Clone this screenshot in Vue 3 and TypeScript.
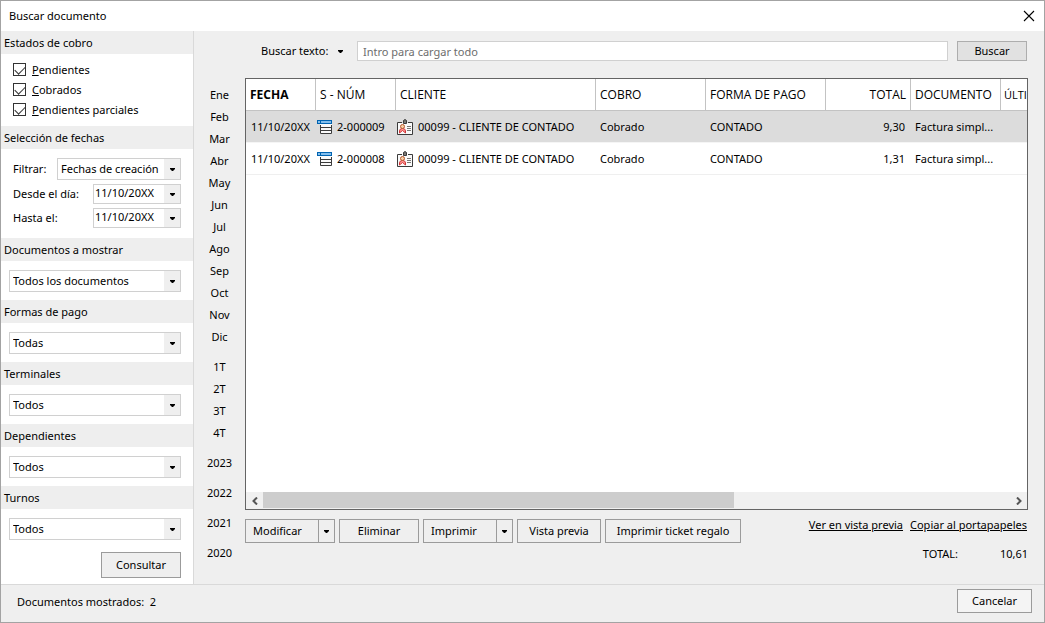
<script setup lang="ts">
import { ref } from 'vue'

interface Row {
  id: number
  date: string
  num: string
  client: string
  status: string
  payment: string
  total: string
  doc: string
}

const states = ref([
  { id: 'pend', key: 'P', rest: 'endientes', on: true },
  { id: 'cob', key: 'C', rest: 'obrados', on: true },
  { id: 'parc', key: 'P', rest: 'endientes parciales', on: true },
])

const dates = ref([
  { id: 'from', label: 'Desde el día:', value: '11/10/20XX' },
  { id: 'to', label: 'Hasta el:', value: '11/10/20XX' },
])

const filters = [
  { id: 'docs', title: 'Documentos a mostrar', value: 'Todos los documentos' },
  { id: 'pago', title: 'Formas de pago', value: 'Todas' },
  { id: 'term', title: 'Terminales', value: 'Todos' },
  { id: 'dep', title: 'Dependientes', value: 'Todos' },
  { id: 'turn', title: 'Turnos', value: 'Todos' },
]

const months = ['Ene', 'Feb', 'Mar', 'Abr', 'May', 'Jun', 'Jul', 'Ago', 'Sep', 'Oct', 'Nov', 'Dic']
const quarters = ['1T', '2T', '3T', '4T']
const years = ['2023', '2022', '2021', '2020']

const rows: Row[] = [
  { id: 9, date: '11/10/20XX', num: '2-000009', client: '00099 - CLIENTE DE CONTADO', status: 'Cobrado', payment: 'CONTADO', total: '9,30', doc: 'Factura simpl...' },
  { id: 8, date: '11/10/20XX', num: '2-000008', client: '00099 - CLIENTE DE CONTADO', status: 'Cobrado', payment: 'CONTADO', total: '1,31', doc: 'Factura simpl...' },
]
const selected = ref(9)
const query = ref('')
</script>

<template>
  <div class="window">
    <header class="titlebar">
      <h1>Buscar documento</h1>
      <button class="close" type="button" aria-label="Cerrar">
        <svg width="12" height="12" viewBox="0 0 12 12"><path d="M1 1L11 11M11 1L1 11" stroke="#000" stroke-width="1.1" fill="none" /></svg>
      </button>
    </header>

    <div class="body">
      <aside class="sidebar">
        <h2>Estados de cobro</h2>
        <div class="checks">
          <label v-for="s in states" :key="s.id">
            <input v-model="s.on" type="checkbox" />
            <span><u>{{ s.key }}</u>{{ s.rest }}</span>
          </label>
        </div>

        <h2>Selección de fechas</h2>
        <div class="dates">
          <div class="field">
            <label for="filter">Filtrar:</label>
            <div class="combo wide">
              <select id="filter"><option>Fechas de creación</option></select>
              <span class="drop"><svg class="caret" width="5" height="3" viewBox="0 0 5 3"><path d="M0 0H5V1L3 3H2L0 1Z" /></svg></span>
            </div>
          </div>
          <div v-for="d in dates" :key="d.id" class="field">
            <label :for="d.id">{{ d.label }}</label>
            <div class="combo date">
              <input :id="d.id" v-model="d.value" type="text" />
              <button class="drop" type="button" aria-label="Abrir calendario"><svg class="caret" width="5" height="3" viewBox="0 0 5 3"><path d="M0 0H5V1L3 3H2L0 1Z" /></svg></button>
            </div>
          </div>
        </div>

        <template v-for="f in filters" :key="f.id">
          <h2><label :for="f.id">{{ f.title }}</label></h2>
          <div class="pick">
            <div class="combo">
              <select :id="f.id"><option>{{ f.value }}</option></select>
              <span class="drop"><svg class="caret" width="5" height="3" viewBox="0 0 5 3"><path d="M0 0H5V1L3 3H2L0 1Z" /></svg></span>
            </div>
          </div>
        </template>
        <button class="btn consult" type="button">Consultar</button>
      </aside>

      <nav class="periods">
        <div class="group">
          <button v-for="m in months" :key="m" type="button">{{ m }}</button>
        </div>
        <div class="group">
          <button v-for="q in quarters" :key="q" type="button">{{ q }}</button>
        </div>
        <div class="group years">
          <button v-for="y in years" :key="y" type="button">{{ y }}</button>
        </div>
      </nav>

      <main class="main">
        <div class="search">
          <label for="query">Buscar texto:</label>
          <button class="bare" type="button" aria-label="Opciones de búsqueda"><svg class="caret" width="5" height="3" viewBox="0 0 5 3"><path d="M0 0H5V1L3 3H2L0 1Z" /></svg></button>
          <input id="query" v-model="query" type="text" placeholder="Intro para cargar todo" />
          <button class="btn find" type="button">Buscar</button>
        </div>

        <div class="grid">
          <div class="viewport">
            <table>
              <colgroup>
                <col class="c-date" /><col class="c-num" /><col class="c-client" /><col class="c-status" />
                <col class="c-pay" /><col class="c-total" /><col class="c-doc" /><col class="c-last" />
              </colgroup>
              <thead>
                <tr>
                  <th class="sorted">FECHA</th>
                  <th>S - NÚM</th>
                  <th>CLIENTE</th>
                  <th>COBRO</th>
                  <th>FORMA DE PAGO</th>
                  <th class="num">TOTAL</th>
                  <th>DOCUMENTO</th>
                  <th>ÚLTI</th>
                </tr>
              </thead>
              <tbody>
                <tr v-for="r in rows" :key="r.id" :class="{ selected: r.id === selected }" @click="selected = r.id">
                  <td>{{ r.date }}</td>
                  <td class="with-icon">
                    <div class="cell">
                      <svg width="15" height="14" viewBox="0 0 15 14">
                        <rect x="3" y="2" width="12" height="12" fill="#fafafa" />
                        <path d="M3.5 5V13.5H14.5V5M3 7.5H15M3 10.5H15" fill="none" stroke="#3b3b3b" />
                        <rect x="0.5" y="0.5" width="14" height="3" fill="#83beec" stroke="#0063b1" />
                        <path d="M3.5 1V3" stroke="#0063b1" />
                      </svg>
                      <span>{{ r.num }}</span>
                    </div>
                  </td>
                  <td class="with-icon">
                    <div class="cell">
                      <svg width="16" height="16" viewBox="0 0 16 16">
                        <path d="M5 3.5H0.5V15.5H15.5V3.5H11" fill="none" stroke="#3b3b3b" />
                        <path d="M1 4H15V15H1Z" fill="#fafafa" />
                        <path d="M6.5 4.5V1.5Q8 -0.5 9.5 1.5V4.5Z" fill="#797774" stroke="#3b3b3b" />
                        <path d="M10 7.5H14M10 9.5H14M10 11.5H14" stroke="#797774" />
                        <path d="M2.5 14V12Q2.5 9.5 5.5 9.5Q8.5 9.5 8.5 12V14L5.5 11.5Z" fill="#ff9a94" stroke="#d13438" />
                        <circle cx="5.5" cy="7.5" r="2" fill="#f8d0a8" stroke="#b5562c" />
                      </svg>
                      <span>{{ r.client }}</span>
                    </div>
                  </td>
                  <td>{{ r.status }}</td>
                  <td>{{ r.payment }}</td>
                  <td class="num">{{ r.total }}</td>
                  <td>{{ r.doc }}</td>
                  <td></td>
                </tr>
              </tbody>
            </table>
          </div>
          <div class="scrollbar">
            <button type="button" aria-label="Desplazar a la izquierda"><svg width="6" height="8" viewBox="0 0 6 8"><path d="M5 0.5L1.5 4L5 7.5" /></svg></button>
            <div class="track"><div class="thumb"></div></div>
            <button type="button" aria-label="Desplazar a la derecha"><svg width="6" height="8" viewBox="0 0 6 8"><path d="M1 0.5L4.5 4L1 7.5" /></svg></button>
          </div>
        </div>

        <div class="actions">
          <div class="split">
            <button class="btn" type="button">Modificar</button>
            <button class="btn arrow" type="button" aria-label="Más opciones de modificar"><svg class="caret" width="5" height="3" viewBox="0 0 5 3"><path d="M0 0H5V1L3 3H2L0 1Z" /></svg></button>
          </div>
          <button class="btn w80" type="button">Eliminar</button>
          <div class="split">
            <button class="btn" type="button">Imprimir</button>
            <button class="btn arrow" type="button" aria-label="Más opciones de imprimir"><svg class="caret" width="5" height="3" viewBox="0 0 5 3"><path d="M0 0H5V1L3 3H2L0 1Z" /></svg></button>
          </div>
          <button class="btn w84" type="button">Vista previa</button>
          <button class="btn w136" type="button">Imprimir ticket regalo</button>
          <div class="links">
            <a href="#vista">Ver en vista previa</a>
            <a href="#copiar">Copiar al portapapeles</a>
          </div>
        </div>
        <div class="sum"><span>TOTAL:</span><output>10,61</output></div>
      </main>
    </div>

    <footer class="footer">
      <p>Documentos mostrados:&nbsp; 2</p>
      <button class="btn cancel" type="button">Cancelar</button>
    </footer>
  </div>
</template>

<style>
body { margin: 0; background: #efefef; }
</style>

<style scoped>
* { box-sizing: border-box; }
.window {
  display: flex;
  flex-direction: column;
  min-height: 100vh;
  border: 1px solid #a3a3a3;
  background: #efefef;
  color: #000;
  font-family: "Noto Sans", "Open Sans", sans-serif;
  font-size: 11px;
  line-height: 16px;
  white-space: nowrap;
}
button, input, select { font: inherit; color: inherit; margin: 0; padding: 0; border: 0; border-radius: 0; background: none; }
h1, h2, p { margin: 0; font-size: inherit; font-weight: 400; }
.caret { display: block; fill: #000; }
.btn { height: 24px; border: 1px solid #9b9b9b; background: #efefef; text-align: center; }

.titlebar { display: flex; align-items: center; justify-content: space-between; height: 30px; padding: 0 9px 0 8px; background: #fff; }
.close { display: flex; }

.body { display: flex; flex: 1; }
.sidebar { display: flex; flex-direction: column; width: 193px; border-right: 1px solid #d9d9d9; background: #fff; }
.sidebar h2 { height: 23px; padding: 0 3px; background: #eee; line-height: 24px; }
.checks { padding: 6px 12px; }
.checks label { display: flex; align-items: center; gap: 6px; height: 20px; }
.checks input { appearance: none; width: 13px; height: 13px; margin-bottom: 1px; border: 1px solid #333; background: #fff; }
.checks input:checked::before { content: ""; display: block; width: 9px; height: 5px; margin: 2px 1px; border: solid #333; border-width: 0 0 1px 1px; transform: rotate(-45deg); }
.dates { display: flex; flex-direction: column; gap: 4px; padding: 9px 12px 10px; }
.field { display: flex; align-items: center; justify-content: space-between; }
.combo { display: flex; flex: 1; height: 22px; border: 1px solid #d0d0d0; background: #fff; }
.combo.wide { flex: none; width: 124px; }
.combo.date { flex: none; width: 88px; height: 20px; }
.combo select, .combo input { appearance: none; flex: 1; min-width: 0; padding-left: 3px; outline: none; }
.combo.date input { padding: 0 0 2px 1px; }
.drop { display: flex; align-items: center; justify-content: center; width: 16px; background: #efefef; pointer-events: none; }
.pick { display: flex; padding: 9px 12px 8px 8px; }
.consult { align-self: flex-end; width: 80px; height: 26px; margin: 4px 12px 6px; }

.periods { width: 51px; padding-top: 53px; }
.group { display: flex; flex-direction: column; margin-bottom: 8px; }
.group button { height: 22px; text-align: center; }
.group.years { gap: 8px; }

.main { display: flex; flex: 1; flex-direction: column; min-width: 0; padding: 10px 16px 0 0; }
.search { display: flex; align-items: center; height: 20px; padding: 0 1px 0 16px; }
.search label { width: 72px; }
.bare { display: flex; justify-content: center; width: 14px; }
.search input { flex: 1; height: 20px; margin: 0 9px 0 10px; padding-left: 5px; border: 1px solid #d0d0d0; background: #fff; outline: none; }
.search input::placeholder { color: #6d6d6d; opacity: 1; }
.btn.find { width: 70px; height: 20px; border-color: #adadad; background: #e1e1e1; line-height: 16px; }

.grid { display: flex; flex: 1; flex-direction: column; margin-top: 17px; border: 1px solid #646464; background: #fff; }
.viewport { flex: 1; overflow: hidden; }
table { width: 100%; table-layout: fixed; border-collapse: separate; border-spacing: 0; }
.c-date { width: 70px; }
.c-num { width: 80px; }
.c-client { width: 200px; }
.c-status { width: 110px; }
.c-pay { width: 120px; }
.c-total { width: 85px; }
.c-doc { width: 90px; }
th, td { padding: 0 4px; text-align: left; font-weight: 400; overflow: hidden; }
th { height: 32px; border-right: 1px solid #c3c3c3; border-bottom: 1px solid #c3c3c3; font-family: "Open Sans", "Noto Sans", sans-serif; font-size: 12px; }
th:last-child { padding: 0 0 0 3px; border-right: 0; font-size: 11px; }
th.sorted { font-weight: 700; }
td { height: 32px; border-bottom: 1px solid #efefef; }
td:first-child { padding: 0 0 0 5px; }
td.with-icon { padding: 0 1px; }
.cell { display: flex; align-items: center; gap: 5px; }
.num { text-align: right; }
td.num { padding-right: 6px; }
tr.selected td { background: #dcdcdc; border-bottom-color: #f5f5f5; }

.scrollbar { display: flex; height: 17px; background: #f0f0f0; }
.scrollbar button { display: flex; align-items: center; justify-content: center; width: 17px; }
.scrollbar path { fill: none; stroke: #555; stroke-width: 2; }
.track { flex: 1; padding-bottom: 1px; }
.thumb { width: 63%; height: 100%; background: #cdcdcd; }

.actions { display: flex; gap: 4px; margin-top: 9px; }
.split { display: flex; width: 90px; }
.split .btn { flex: 1; padding-left: 7px; text-align: left; }
.split .btn.arrow { display: flex; flex: none; align-items: center; justify-content: center; width: 16px; padding: 0; border-left: 0; }
.w80 { width: 80px; }
.w84 { width: 84px; }
.w136 { width: 136px; }
.links { display: flex; gap: 7px; margin-left: auto; padding-right: 1px; line-height: 12px; }
.links a { color: #000; }
.sum { display: flex; justify-content: flex-end; height: 41px; padding-top: 3px; }
.sum output { width: 70px; text-align: right; }

.footer { display: flex; align-items: flex-start; justify-content: space-between; height: 38px; padding: 4px 12px 0 16px; border-top: 1px solid #d9d9d9; }
.footer p { line-height: 26px; }
.btn.cancel { width: 75px; background: #f4f4f4; }
</style>
